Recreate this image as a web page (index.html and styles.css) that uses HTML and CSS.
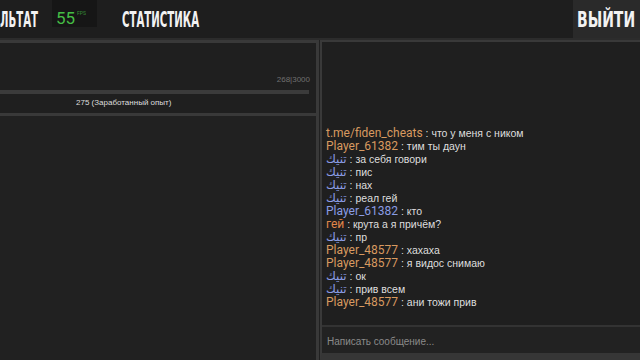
FILE: index.html
```html
<!DOCTYPE html>
<html lang="ru">

<head>
    <meta charset="UTF-8">
    <title>Статистика</title>
    <link rel="stylesheet" href="styles.css">
</head>

<body>
    <header class="topbar">
        <div class="tab tab-cut"><span>ЛЬТАТ</span></div>
        <div class="fps">55<sup>FPS</sup></div>
        <div class="tab tab-stats"><span>СТАТИСТИКА</span></div>
        <div class="spacer"></div>
        <button class="exit tab"><span>ВЫЙТИ</span></button>
    </header>

    <main class="layout">
        <section class="left">
            <div class="xp-panel">
                <div class="xp-count">268|3000</div>
                <div class="xp-bar"></div>
                <div class="xp-label">275 (Заработанный опыт)</div>
            </div>
            <div class="left-body"></div>
        </section>

        <section class="chat">
            <div class="messages">
                <p><span class="name orange">t.me/fiden_cheats</span> : что у меня с ником</p>
                <p><span class="name orange">Player_61382</span> : тим ты даун</p>
                <p><span class="name blue arab">تنيك</span> : за себя говори</p>
                <p><span class="name blue arab">تنيك</span> : пис</p>
                <p><span class="name blue arab">تنيك</span> : нах</p>
                <p><span class="name blue arab">تنيك</span> : реал гей</p>
                <p><span class="name blue">Player_61382</span> : кто</p>
                <p><span class="name red">гей</span> : крута а я причём?</p>
                <p><span class="name blue arab">تنيك</span> : пр</p>
                <p><span class="name orange">Player_48577</span> : хахаха</p>
                <p><span class="name orange">Player_48577</span> : я видос снимаю</p>
                <p><span class="name blue arab">تنيك</span> : ок</p>
                <p><span class="name blue arab">تنيك</span> : прив всем</p>
                <p><span class="name orange">Player_48577</span> : ани тожи прив</p>
            </div>
            <input class="chat-input" type="text" placeholder="Написать сообщение...">
        </section>
    </main>
</body>

</html>
```

FILE: styles.css
```css
*,
*::before,
*::after {
    box-sizing: border-box;
    margin: 0;
    padding: 0;
}

:root {
    --bg: #212121;
    --bar: #1e1e1e;
    --line: #393939;
    --text: #dedede;
    --muted: #6f6f6f;
    --orange: #d89a60;
    --red: #e0864a;
    --blue: #8a9ce4;
}

html,
body {
    height: 100%;
    overflow: hidden;
}

body {
    background-color: var(--bg);
    color: var(--text);
    font-family: "Liberation Sans", Arial, sans-serif;
}

/* top bar */

.topbar {
    height: 38px;
    display: flex;
    align-items: stretch;
    background-color: var(--bar);
}

.tab {
    font-family: "DejaVu Sans Condensed", "Liberation Sans", sans-serif;
    font-weight: bold;
    font-size: 21px;
    color: #f2f2f2;
    line-height: 40px;
    white-space: nowrap;
}

.tab span {
    display: inline-block;
    transform: scaleX(0.54);
    transform-origin: left center;
}

.tab-cut {
    width: 52px;
}

.tab-stats {
    margin-left: 25px;
}

.fps {
    width: 45px;
    height: 27px;
    background-color: #161616;
    color: #45bd45;
    font-family: Roboto, sans-serif;
    font-size: 17px;
    line-height: 27px;
    padding-left: 4px;
}

.fps sup {
    font-size: 5px;
    vertical-align: 9px;
    margin-left: 2px;
    opacity: 0.7;
}

.spacer {
    flex: 1;
}

.exit {
    width: 67px;
    background-color: #2a2a2a;
    border: none;
    text-align: left;
    padding-left: 4px;
}

.exit span {
    transform: scaleX(0.74);
}

/* main layout */

.layout {
    height: calc(100% - 38px);
    display: grid;
    grid-template-columns: 319px 1fr;
    border-top: 2px solid #2c2c2c;
}

.left {
    display: flex;
    flex-direction: column;
}

.xp-panel {
    height: 76px;
    border: 3px solid var(--line);
    border-left: none;
    padding: 32px 7px 0 0;
    background-color: #1f1f1f;
}

.xp-count {
    text-align: right;
    font-size: 8px;
    color: var(--muted);
    margin-right: -1px;
}

.xp-bar {
    height: 4px;
    margin-top: 6px;
    background-color: #3b3b3b;
}

.xp-label {
    font-size: 8px;
    margin-top: 4px;
    padding-left: 76px;
}

.left-body {
    flex: 1;
    border-right: 3px solid var(--line);
    margin-top: -1px;
}

/* chat */

.chat {
    display: flex;
    flex-direction: column;
    border-left: 2px solid var(--line);
    border-top: 2px solid var(--line);
    border-bottom: 7px solid #363636;
    margin-left: 1px;
    background-color: #1f1f1f;
}

.messages {
    flex: 1;
    display: flex;
    flex-direction: column;
    justify-content: flex-end;
    padding: 0 0 16px 4px;
}

.messages p {
    font-size: 10.5px;
    line-height: 13px;
    height: 13px;
    white-space: nowrap;
}

.name {
    font-family: Roboto, sans-serif;
    font-size: 12px;
}

.arab {
    font-family: "DejaVu Sans", sans-serif;
    font-size: 12px;
    line-height: 13px;
}

.orange {
    color: var(--orange);
}

.red {
    color: var(--red);
}

.blue {
    color: var(--blue);
}

.chat-input {
    height: 28px;
    border: none;
    border-top: 2px solid #333;
    background-color: #222;
    color: var(--text);
    font-family: "Liberation Sans", Arial, sans-serif;
    font-size: 10px;
    padding: 2px 0 0 5px;
    outline: none;
}

.chat-input::placeholder {
    color: #8a8a8a;
}
```
